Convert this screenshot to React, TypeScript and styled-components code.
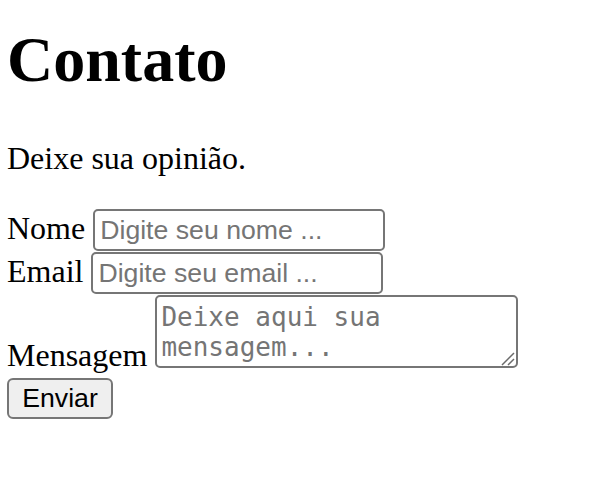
import React from 'react';
import styled, { createGlobalStyle } from 'styled-components';

const GlobalStyle = createGlobalStyle`
  body {
    margin: 0;
    background: #fff;
  }
`;

const Page = styled.main`
  padding: 0 7px;
  font-family: 'Liberation Serif', 'Times New Roman', serif;
  font-size: 32px;
  color: #000;
`;

const Title = styled.h1`
  margin: 23px 0 43px;
  font-size: 64px;
  font-weight: bold;
  line-height: normal;
`;

const Lead = styled.p`
  margin: 0 0 32px;
`;

const Form = styled.form`
  display: flex;
  flex-direction: column;
  align-items: flex-start;
`;

const Row = styled.div<{ $height: number }>`
  display: flex;
  align-items: baseline;
  gap: 8px;
  height: ${({ $height }) => $height}px;
`;

const MessageRow = styled.div`
  display: flex;
  align-items: flex-start;
  gap: 8px;
  height: 83px;
`;

const Label = styled.label`
  line-height: normal;
`;

const MessageLabel = styled(Label)`
  align-self: flex-end;
  margin-bottom: 4px;
`;

const TextField = styled.input`
  box-sizing: border-box;
  width: 292px;
  height: 42px;
  margin: 0;
  padding: 2px 5px;
  border: 2px solid #767676;
  border-radius: 5px;
  background: #fff;
  font-family: 'Liberation Sans', Arial, sans-serif;
  font-size: 26.67px;
  color: #000;

  &::placeholder {
    color: #757575;
  }
`;

const FieldWrap = styled.div`
  position: relative;
  display: flex;
`;

const MessageField = styled.textarea`
  box-sizing: border-box;
  width: 363px;
  height: 73px;
  margin: 0;
  padding: 5px 4px;
  border: 2px solid #767676;
  border-radius: 5px;
  background: #fff;
  font-family: 'DejaVu Sans Mono', 'Liberation Mono', monospace;
  font-size: 26px;
  line-height: 30px;
  color: #000;
  resize: none;
  overflow: hidden;

  &::placeholder {
    color: #757575;
  }
`;

const Grip = styled.svg`
  position: absolute;
  right: 3px;
  bottom: 2px;
  width: 14px;
  height: 14px;
  pointer-events: none;
`;

const SubmitButton = styled.button`
  box-sizing: border-box;
  width: 106px;
  height: 41px;
  margin: 0;
  padding: 0 12px;
  border: 2px solid #767676;
  border-radius: 6px;
  background: #efefef;
  font-family: 'Liberation Sans', Arial, sans-serif;
  font-size: 26.67px;
  color: #000;
`;

export default function App() {
  return (
    <>
      <GlobalStyle />
      <Page>
        <Title>Contato</Title>
        <Lead>Deixe sua opinião.</Lead>
        <Form onSubmit={(e) => e.preventDefault()}>
          <Row $height={43}>
            <Label htmlFor="nome">Nome</Label>
            <TextField id="nome" type="text" placeholder="Digite seu nome ..." />
          </Row>
          <Row $height={43}>
            <Label htmlFor="email">Email</Label>
            <TextField id="email" type="email" placeholder="Digite seu email ..." />
          </Row>
          <MessageRow>
            <MessageLabel htmlFor="mensagem">Mensagem</MessageLabel>
            <FieldWrap>
              <MessageField id="mensagem" placeholder="Deixe aqui sua mensagem..." />
              <Grip viewBox="0 0 14 14">
                <path d="M1 13 L13 1 M7 13 L13 7" stroke="#6b6b6b" strokeWidth="1.5" fill="none" />
              </Grip>
            </FieldWrap>
          </MessageRow>
          <SubmitButton type="submit">Enviar</SubmitButton>
        </Form>
      </Page>
    </>
  );
}
